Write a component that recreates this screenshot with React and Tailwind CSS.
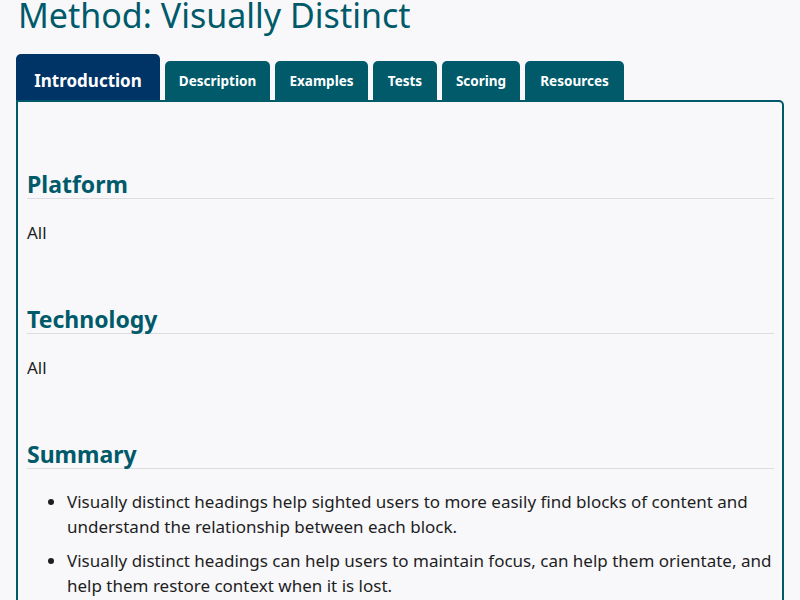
import React, { useState } from "react";

// full class names so tailwind picks them up
const TABS = [
  { label: "Introduction", w: "w-[144px]" },
  { label: "Description", w: "w-[105px]" },
  { label: "Examples", w: "w-[93px]" },
  { label: "Tests", w: "w-[64px]" },
  { label: "Scoring", w: "w-[78px]" },
  { label: "Resources", w: "w-[99px]" },
];

const Section = ({ title, children }) => (
  <section className="mb-[61px]">
    <h2 className="text-[23px] leading-[27px] font-bold text-[#005a6a] border-b border-[#dcdce2]">
      {title}
    </h2>
    <div className="mt-[21px]">{children}</div>
  </section>
);

export default function App() {
  const [active, setActive] = useState("Introduction");

  return (
    <div className="bg-[#f8f8fb] px-4 text-[#1e1e1e] font-['Noto_Sans',sans-serif] overflow-hidden h-[600px]">
      <h1 className="mt-[-10px] ml-[2px] text-[34px] leading-[50px] text-[#005a6a]">
        Method: Visually Distinct
      </h1>

      {/* tab strip */}
      <div className="mt-[14px] flex items-end gap-[5px]">
        {TABS.map(({ label, w }) =>
          label === active ? (
            <button
              key={label}
              onClick={() => setActive(label)}
              className={`${w} h-[46px] pt-[7px] rounded-t-[5px] bg-[#003366] text-white text-[17px] font-bold`}
            >
              {label}
            </button>
          ) : (
            <button
              key={label}
              onClick={() => setActive(label)}
              className={`${w} h-[39px] pt-[2px] rounded-t-[5px] bg-[#005a6a] text-white text-[13.5px] font-bold`}
            >
              {label}
            </button>
          )
        )}
      </div>

      {/* panel */}
      <div className="border-2 border-[#005a6a] rounded-tr-[5px] pl-[9px] pr-[8px] pt-[69px] pb-8">
        <Section title="Platform">
          <p className="text-[17px] leading-[25px]">All</p>
        </Section>
        <Section title="Technology">
          <p className="text-[17px] leading-[25px]">All</p>
        </Section>
        <Section title="Summary">
          <ul className="mt-[-1px] pl-[40px] list-disc text-[17px] leading-[25px] space-y-[9px]">
            <li>
              Visually distinct headings help sighted users to more easily find blocks of content and
              understand the relationship between each block.
            </li>
            <li>
              Visually distinct headings can help users to maintain focus, can help them orientate, and
              help them restore context when it is lost.
            </li>
          </ul>
        </Section>
      </div>
    </div>
  );
}
